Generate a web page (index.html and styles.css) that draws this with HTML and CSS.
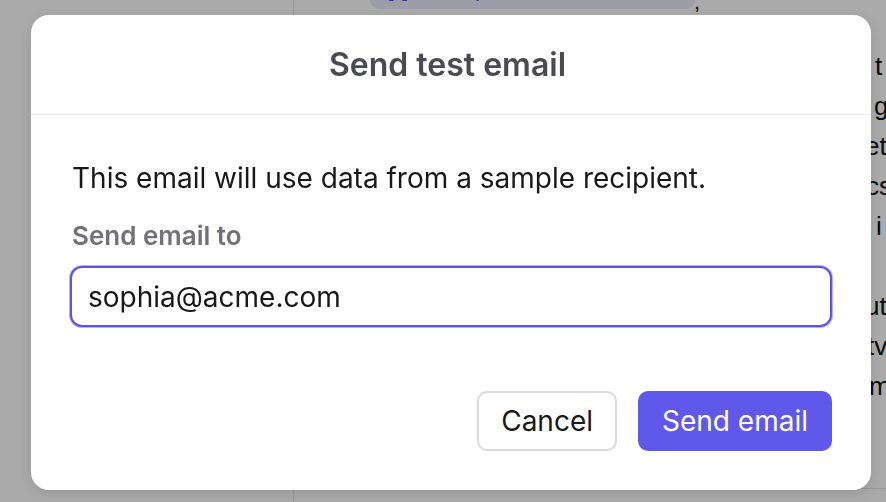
FILE: index.html
```html
<!DOCTYPE html>
<html lang="en">
<head>
<meta charset="utf-8">
<title>Send test email</title>
<link rel="stylesheet" href="styles.css">
</head>
<body>
<div class="page">
  <aside class="sidebar"></aside>
  <main class="editor">
    <div class="code-row"><span class="code-pill">{{ recipient.first_name }}</span><span class="semi">;</span></div>
    <div class="para">
      <div class="ln l1">t</div>
      <div class="ln l2">g</div>
      <div class="ln l3">et</div>
      <div class="ln l4">cs</div>
      <div class="ln l5">i</div>
      <div class="ln l6">&nbsp;</div>
      <div class="ln l7">ut</div>
      <div class="ln l8">tv</div>
      <div class="ln l9">m</div>
    </div>
  </main>
</div>
<div class="backdrop">
  <div class="modal" role="dialog" aria-labelledby="dlg-title">
    <header class="modal-head">
      <h2 id="dlg-title" class="modal-title">Send test email</h2>
    </header>
    <div class="modal-body">
      <p class="intro">This email will use data from a sample recipient.</p>
      <label class="field-label" for="to">Send email to</label>
      <input id="to" class="field-input" type="text" value="sophia@acme.com">
      <div class="actions">
        <button class="btn btn-secondary" type="button">Cancel</button>
        <button class="btn btn-primary" type="button">Send email</button>
      </div>
    </div>
  </div>
</div>
</body>
</html>
```

FILE: styles.css
```css
* { box-sizing: border-box; }
html, body { margin: 0; padding: 0; }
body {
  width: 886px;
  height: 502px;
  overflow: hidden;
  font-family: Inter, "Noto Sans", sans-serif;
  background: #ffffff;
}
.page {
  display: flex;
  height: 502px;
}
.sidebar {
  width: 294px;
  flex: none;
  border-right: 1px solid #e4e4e4;
  background: #ffffff;
}
.editor {
  flex: 1;
  height: 489px;
  border-bottom: 1px solid #e4e4e4;
  overflow: hidden;
}
.code-row {
  display: flex;
  align-items: flex-end;
  height: 9px;
  margin-left: 76px;
  overflow: visible;
}
.code-pill {
  display: block;
  width: 325px;
  height: 30px;
  margin-top: -21px;
  padding: 0 12px;
  background: #ececff;
  border-radius: 0 0 9px 9px;
  color: #4f46e5;
  font-family: "Liberation Mono", monospace;
  font-size: 22px;
  line-height: 24px;
  white-space: nowrap;
  overflow: hidden;
}
.semi {
  font-family: "Liberation Sans", Arial, sans-serif;
  font-size: 22px;
  line-height: 14px;
  color: #111;
  margin-left: -1px;
}
.para {
  margin-top: 37px;
  padding-left: 571px;
  font-family: "Liberation Sans", Arial, sans-serif;
  font-size: 26px;
  line-height: 40px;
  color: #111;
}
.ln { white-space: nowrap; }
.l1 { padding-left: 10px; }
.l2 { padding-left: 9px; }
.l3 { padding-left: 0; }
.l4 { padding-left: 1px; }
.l5 { padding-left: 11px; }
.l7 { padding-left: 0; }
.l8 { padding-left: 2px; }
.l9 { padding-left: 4px; }

.backdrop {
  position: fixed;
  inset: 0;
  background: rgba(0, 0, 0, 0.335);
}
.modal {
  position: absolute;
  left: 31px;
  top: 15px;
  width: 840px;
  height: 475px;
  background: #ffffff;
  border-radius: 18px;
  box-shadow: 0 4px 14px rgba(0, 0, 0, 0.12);
  display: flex;
  flex-direction: column;
}
.modal-head {
  height: 100px;
  border-bottom: 1px solid #e8e8ee;
  display: flex;
  align-items: center;
  justify-content: center;
  padding-right: 7px;
}
.modal-title {
  margin: 0;
  font-size: 32px;
  line-height: 40px;
  font-weight: 600;
  color: #4a4a54;
}
.modal-body {
  padding: 46px 39px 39px 41px;
  display: flex;
  flex-direction: column;
  flex: 1;
}
.intro {
  margin: 0;
  font-size: 28px;
  line-height: 34px;
  color: #18181b;
}
.field-label {
  margin-top: 25px;
  font-size: 26px;
  line-height: 32px;
  font-weight: 600;
  color: #71717a;
}
.field-input {
  margin: 14px 0 0 -2px;
  height: 61px;
  width: 762px;
  border: 2px solid #5b54e8;
  box-shadow: 0 0 0 1px rgba(91, 84, 232, 0.45);
  border-radius: 12px;
  padding: 0 16px;
  font-family: Inter, "Noto Sans", sans-serif;
  font-size: 28px;
  color: #18181b;
  outline: none;
  background: #fff;
}
.actions {
  margin-top: auto;
  display: flex;
  justify-content: flex-end;
  gap: 21px;
}
.btn {
  height: 60px;
  border-radius: 10px;
  font-family: Inter, "Noto Sans", sans-serif;
  font-size: 28px;
  cursor: pointer;
}
.btn-secondary {
  background: #ffffff;
  border: 2px solid #d9d9de;
  color: #18181b;
  padding: 0 22px;
}
.btn-primary {
  background: #6058ea;
  border: none;
  color: #ffffff;
  padding: 0 24px;
}
```
